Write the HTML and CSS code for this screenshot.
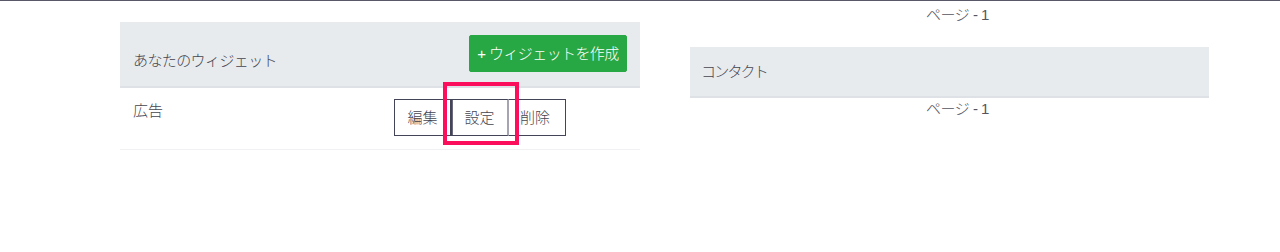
FILE: index.html
```html
<!DOCTYPE html>
<html lang="ja">
<head>
<meta charset="utf-8">
<link rel="stylesheet" href="styles.css">
</head>
<body>
<div class="page">
  <div class="col-left">
    <div class="card">
      <div class="card-header">
        <div class="title">あなたのウィジェット</div>
        <button class="btn-create">+ ウィジェットを作成</button>
      </div>
      <div class="row">
        <div class="name">広告</div>
        <div class="actions">
          <div class="group">
            <button class="btn-out">編集</button>
            <button class="btn-out btn-mid">設定</button>
            <button class="btn-out btn-last">削除</button>
            <span class="highlight"></span>
          </div>
        </div>
      </div>
    </div>
  </div>
  <div class="col-right">
    <div class="pager">ページ - 1</div>
    <div class="card-header plain">
      <div class="title2">コンタクト</div>
    </div>
    <div class="pager">ページ - 1</div>
  </div>
</div>
</body>
</html>
```

FILE: styles.css
```css
html, body {
  margin: 0;
  padding: 0;
  background: #ffffff;
}
body {
  font-family: "Liberation Sans", "Noto Sans CJK JP", sans-serif;
  font-weight: 300;
  color: #45454f;
  width: 1280px;
  height: 252px;
  overflow: hidden;
}
.page {
  border-top: 1px solid #585868;
  display: grid;
  grid-template-columns: 520px 519px;
  column-gap: 50px;
  padding-left: 120px;
  align-items: start;
}
.col-left {
  padding-top: 21px;
}
.card-header {
  background: #e8ebee;
  border-bottom: 2px solid #dee2e6;
  display: flex;
  justify-content: space-between;
  align-items: flex-start;
  padding: 13px 13px 14px 13px;
  height: 66px;
  box-sizing: border-box;
}
.title {
  font-size: 15px;
  line-height: 22px;
  margin-top: 15px;
  letter-spacing: -0.6px;
}
.btn-create {
  font-family: inherit;
  font-weight: 300;
  background: #28a745;
  color: #ffffff;
  border: 1px solid #28a745;
  border-radius: 2px;
  font-size: 15px;
  line-height: 21px;
  padding: 0 4px;
  width: 158px;
  height: 37px;
  white-space: nowrap;
  text-align: center;
  letter-spacing: -0.6px;
}
.row {
  display: flex;
  justify-content: space-between;
  align-items: flex-start;
  padding: 11px 74px 13px 13px;
  border-bottom: 1px solid #f1f1f3;
}
.name {
  font-size: 15px;
  line-height: 22px;
  margin-top: 1px;
}
.group {
  position: relative;
  display: flex;
}
.btn-out {
  font-family: inherit;
  font-weight: 300;
  background: #ffffff;
  color: #45454f;
  border: 1px solid #444458;
  border-radius: 0;
  font-size: 15px;
  line-height: 21px;
  padding: 7px 0;
  height: 37px;
  width: 57px;
  margin: 0;
  white-space: nowrap;
  text-align: center;
}
.btn-mid {
  width: 58px;
  border-left: 1px solid #444458;
  border-right: 2px solid #a4a4b2;
  box-shadow: inset 1px 0 0 #6a6a7c;
}
.btn-last {
  border-left: none;
  padding-left: 0;
  padding-right: 4px;
}
.highlight {
  position: absolute;
  left: 49px;
  top: -17px;
  width: 76px;
  height: 63px;
  border: 4px solid #fb0f5c;
  box-sizing: border-box;
  pointer-events: none;
}
.col-right {
  padding-top: 3px;
}
.pager {
  font-size: 15px;
  line-height: 22px;
  text-align: center;
  color: #55555f;
  padding-left: 16px;
  letter-spacing: -0.5px;
}
.pager:first-child {
  margin-bottom: 21px;
}
.card-header.plain {
  height: 51px;
  padding: 0 11px;
  align-items: center;
}
.title2 {
  font-size: 15px;
  line-height: 22px;
  letter-spacing: -1.8px;
}
```
